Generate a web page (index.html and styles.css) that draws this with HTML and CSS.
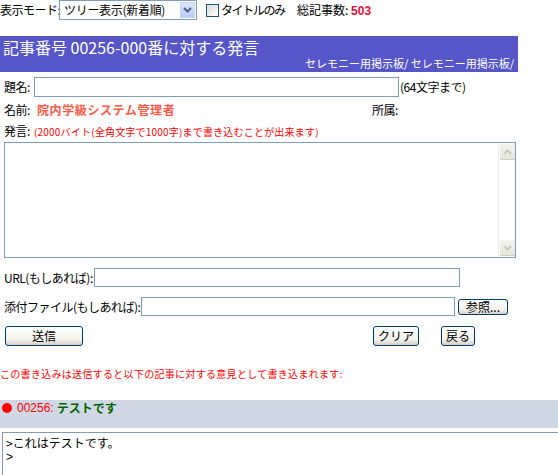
FILE: index.html
```html
<!DOCTYPE html>
<html lang="ja">
<head>
<meta charset="utf-8">
<link rel="stylesheet" href="styles.css">
</head>
<body>
<div class="top">
  <span class="lbl l-mode">表示モード:</span>
  <div class="select"><span class="sel-text">ツリー表示(新着順)</span><span class="sel-btn"><svg width="9" height="6" viewBox="0 0 9 6"><path d="M1 1 L4.5 4.5 L8 1" fill="none" stroke="#4d6185" stroke-width="2"/></svg></span></div>
  <span class="check"></span><span class="lbl l-only">タイトルのみ</span>
  <span class="lbl total">総記事数: <b class="count">503</b></span>
</div>

<div class="header">
  <div class="h-title">記事番号 00256-000番に対する発言</div>
  <div class="h-sub">セレモニー用掲示板/ セレモニー用掲示板/</div>
</div>

<div class="row r-title">
  <span class="lbl l-title">題名:</span><span class="input in-title"></span><span class="lbl">(64文字まで)</span>
</div>
<div class="row r-name">
  <span class="lbl l-name">名前:</span><span class="name">院内学級システム管理者</span><span class="lbl">所属:</span>
</div>
<div class="row r-msg">
  <span class="lbl l-msg">発言:</span><span class="note-s">(2000バイト(全角文字で1000字)まで書き込むことが出来ます)</span>
</div>
<div class="textarea">
  <div class="sbar"><span class="sb-btn"><svg width="9" height="6" viewBox="0 0 9 6"><path d="M1 5 L4.5 1.5 L8 5" fill="none" stroke="#c8c8bc" stroke-width="2"/></svg></span><span class="sb-btn"><svg width="9" height="6" viewBox="0 0 9 6"><path d="M1 1 L4.5 4.5 L8 1" fill="none" stroke="#c8c8bc" stroke-width="2"/></svg></span></div>
</div>
<div class="row r-url">
  <span class="lbl l-url">URL(もしあれば):</span><span class="input in-url"></span>
</div>
<div class="row r-file">
  <span class="lbl l-file">添付ファイル(もしあれば):</span><span class="input in-file"></span><span class="btn b-ref">参照...</span>
</div>
<div class="row r-btns">
  <span class="btn b-send">送信</span><span class="btn b-clear">クリア</span><span class="btn b-back">戻る</span>
</div>
<div class="warn">この書き込みは送信すると以下の記事に対する意見として書き込まれます:</div>
<div class="band"><span class="dot"></span><span class="num">00256:</span><b class="subj">テストです</b></div>
<div class="quote"><div class="qline q1">&gt;これはテストです。</div><div class="qline q2">&gt;</div></div>
</body>
</html>
```
FILE: styles.css
```css
html, body { margin: 0; padding: 0; background: #fff; overflow: hidden; }
body {
  font-family: "Noto Sans CJK JP", "Liberation Sans", sans-serif;
  font-size: 12px;
  color: #000;
  width: 558px;
  height: 475px;
}
.lbl { line-height: 14px; white-space: nowrap; flex: none; }
.top { display: flex; align-items: center; height: 20px; }
.l-mode { width: 59px; letter-spacing: -0.5px; }
.select {
  width: 136px; height: 18px;
  border: 1px solid #7f9db9;
  display: flex; align-items: center; justify-content: space-between;
  flex: none;
}
.sel-text { padding-left: 4px; line-height: 14px; white-space: nowrap; letter-spacing: -0.3px; }
.sel-btn {
  width: 15px; height: 16px; margin-right: 1px;
  background: linear-gradient(#dbe6fb, #b6cbf6);
  border: 1px solid #c3d3fd; box-sizing: border-box;
  display: flex; align-items: center; justify-content: center;
}
.check {
  width: 11px; height: 11px; border: 1px solid #1c5180;
  background: linear-gradient(135deg, #dcdcd7, #fff);
  margin-left: 9px; margin-right: 2px; flex: none;
}
.l-only { width: 64px; letter-spacing: -1.4px; }
.total { margin-left: 12px; }
.count { color: #e0103a; font-family: "Liberation Sans", sans-serif; font-weight: bold; font-size: 12px; }

.header {
  margin-top: 16px;
  width: 518px; height: 36px;
  background: #5656c8;
  color: #fff;
  display: flex; flex-direction: column;
}
.h-title { font-size: 16px; line-height: 20px; padding-left: 3px; margin-top: 1px; white-space: nowrap; }
.h-sub { font-size: 11px; line-height: 13px; text-align: right; padding-right: 4px; white-space: nowrap; }

.row { display: flex; align-items: center; padding-left: 4px; }
.row .lbl { letter-spacing: -0.5px; }
.input { border: 1px solid #7f9db9; box-sizing: border-box; background: #fff; flex: none; }
.r-title { margin-top: 5px; height: 20px; }
.l-title { width: 29px; }
.in-title { width: 365px; height: 20px; margin-left: 1px; margin-right: 1px; }
.r-name { margin-top: 3px; height: 20px; }
.l-name { width: 33px; }
.name { color: #ff5a46; font-weight: bold; width: 335px; line-height: 14px; letter-spacing: 0.6px; white-space: nowrap; flex: none; }
.r-msg { margin-top: 2px; height: 18px; }
.l-msg { width: 30px; }
.note-s { color: #ff0000; font-size: 10px; line-height: 13px; white-space: nowrap; letter-spacing: 0.2px; }

.textarea {
  margin: 2px 0 0 4px;
  width: 512px; height: 116px;
  border: 1px solid #7f9db9; box-sizing: border-box;
  display: flex; justify-content: flex-end;
}
.sbar {
  width: 16px; border-left: 1px solid #eeede5;
  display: flex; flex-direction: column; justify-content: space-between;
  padding: 1px 0;
}
.sb-btn {
  width: 15px; height: 16px; margin-left: 1px;
  background: linear-gradient(#f4f4ee, #e6e6dc);
  border-bottom: 1px solid #cfcfc3; box-sizing: border-box;
  display: flex; align-items: center; justify-content: center;
}

.r-url { margin-top: 10px; height: 19px; }
.l-url { width: 88px; }
.in-url { width: 366px; height: 19px; margin-left: 2px; }
.r-file { margin-top: 10px; height: 19px; }
.l-file { width: 135px; }
.in-file { width: 314px; height: 19px; margin-left: 2px; }
.btn {
  display: flex; align-items: center; justify-content: center;
  border: 1px solid #003c74; border-radius: 3px; box-sizing: border-box;
  background: linear-gradient(#ffffff, #f2f1ea 70%, #d6d0c5);
  line-height: 14px; flex: none;
}
.b-ref { width: 50px; height: 16px; margin-left: 3px; }
.r-btns { margin-top: 9px; height: 21px; padding-left: 5px; }
.b-send { width: 78px; height: 20px; }
.b-clear { width: 46px; height: 20px; margin-left: 290px; }
.b-back { width: 34px; height: 20px; margin-left: 22px; }

.warn { color: #ff0000; font-size: 10px; line-height: 13px; margin-top: 21px; white-space: nowrap; letter-spacing: 0.3px; }
.band {
  margin-top: 20px; height: 28px; background: #d0d8e6;
  display: flex; align-items: flex-start; padding-left: 2px;
}
.dot { width: 10px; height: 10px; border-radius: 50%; background: #ff0000; margin-top: 3px; margin-right: 5px; flex: none; }
.num { color: #ff0000; font-family: "Liberation Sans", sans-serif; font-size: 12px; line-height: 16px; }
.subj { color: #006400; margin-left: 3px; line-height: 16px; }
.quote {
  margin: 4px 0 0 2px;
  height: 60px; width: 570px;
  border-top: 1px solid #7f9db9; border-left: 1px solid #7f9db9;
  padding: 2px 0 0 3px;
  font-size: 12px;
}
.qline { white-space: nowrap; }
.q1 { line-height: 15px; height: 15px; }
.q2 { line-height: 14px; height: 14px; font-family: "Liberation Sans", sans-serif; }
```
